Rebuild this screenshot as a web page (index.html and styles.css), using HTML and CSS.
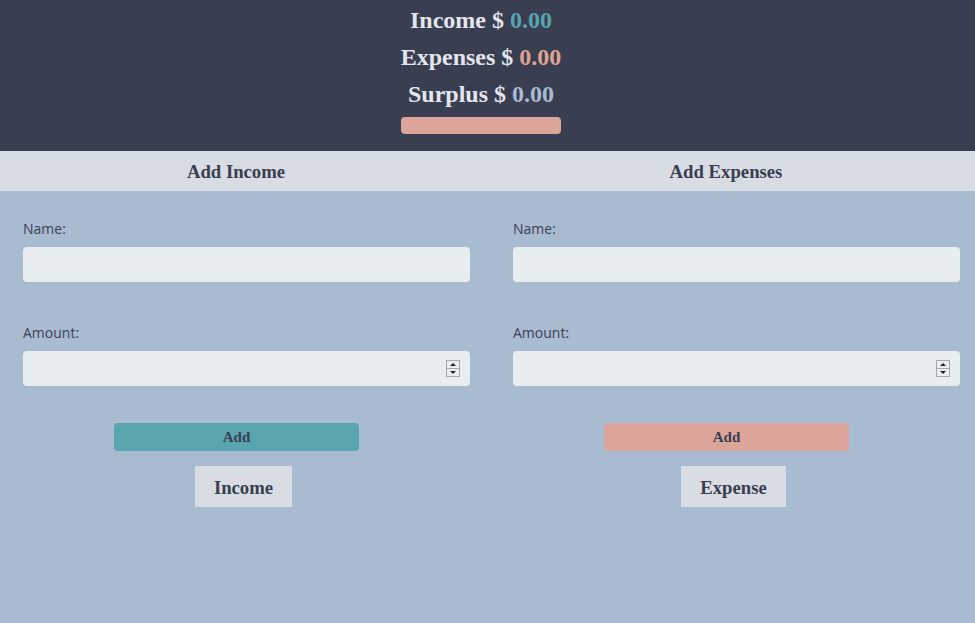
FILE: index.html
```html
<!DOCTYPE html>
<html>
<head>
<meta charset="utf-8">
<link rel="stylesheet" href="styles.css">
</head>
<body>
<header class="summary">
  <div class="total">Income $ <span class="val income">0.00</span></div>
  <div class="total">Expenses $ <span class="val expense">0.00</span></div>
  <div class="total">Surplus $ <span class="val surplus">0.00</span></div>
  <div class="bar"></div>
</header>
<main class="panels">
  <section class="panel">
    <h3 class="panel-title">Add Income</h3>
    <form class="form">
      <label class="label">Name:</label>
      <input class="field" type="text">
      <label class="label label-amount">Amount:</label>
      <div class="field-wrap">
        <input class="field" type="text">
        <svg class="spin" width="14" height="17" viewBox="0 0 14 17"><rect x="0.5" y="0.5" width="13" height="16" fill="#e8edf0" stroke="#a4a8ad"/><line x1="0.5" y1="8.5" x2="13.5" y2="8.5" stroke="#a4a8ad"/><path d="M4 6 L7 3 L10 6 Z" fill="#222"/><path d="M4 11 L7 14 L10 11 Z" fill="#222"/></svg>
      </div>
      <div class="add-row"><button type="button" class="add add-income">Add</button></div>
      <div class="type-row"><button type="button" class="type">Income</button></div>
    </form>
  </section>
  <section class="panel">
    <h3 class="panel-title">Add Expenses</h3>
    <form class="form">
      <label class="label">Name:</label>
      <input class="field" type="text">
      <label class="label label-amount">Amount:</label>
      <div class="field-wrap">
        <input class="field" type="text">
        <svg class="spin" width="14" height="17" viewBox="0 0 14 17"><rect x="0.5" y="0.5" width="13" height="16" fill="#e8edf0" stroke="#a4a8ad"/><line x1="0.5" y1="8.5" x2="13.5" y2="8.5" stroke="#a4a8ad"/><path d="M4 6 L7 3 L10 6 Z" fill="#222"/><path d="M4 11 L7 14 L10 11 Z" fill="#222"/></svg>
      </div>
      <div class="add-row"><button type="button" class="add add-expense">Add</button></div>
      <div class="type-row"><button type="button" class="type">Expense</button></div>
    </form>
  </section>
</main>
</body>
</html>
```
FILE: styles.css
```css
* { box-sizing: border-box; }
html, body { margin: 0; padding: 0; }
body {
  background: #a9bbd0;
  font-family: "Liberation Serif", "Times New Roman", serif;
  color: #393e50;
  width: 975px;
  height: 623px;
  overflow: hidden;
}
.summary {
  background: #393e50;
  height: 151px;
  padding-top: 2px;
  padding-right: 13px;
  display: flex;
  flex-direction: column;
  align-items: center;
}
.total {
  font-size: 24px;
  font-weight: bold;
  line-height: 37px;
  color: #e3e6ee;
}
.val.income { color: #58a5b0; }
.val.expense { color: #dfa393; }
.val.surplus { color: #a9bbd0; }
.bar {
  width: 160px;
  height: 17px;
  margin-top: 4px;
  background: #dca59b;
  border-radius: 4px;
}
.panels {
  display: grid;
  grid-template-columns: 490px 490px;
}
.panel-title {
  margin: 0;
  height: 40px;
  line-height: 40px;
  padding-top: 1px;
  background: #d8dce3;
  font-size: 18.72px;
  font-weight: bold;
  text-align: center;
  padding-right: 18px;
}
.form {
  display: flex;
  flex-direction: column;
  padding: 28px 20px 0 23px;
}
.label {
  font-family: "Open Sans", "Noto Sans", sans-serif;
  font-size: 14px;
  line-height: 20px;
  color: #3b4254;
  margin-bottom: 8px;
}
.label-amount { margin-top: 41px; }
.field {
  display: block;
  width: 100%;
  height: 35px;
  border: none;
  border-radius: 4px;
  background: #e8edf0;
  outline: none;
}
.field-wrap { position: relative; }
.spin {
  position: absolute;
  right: 10px;
  top: 9px;
}
.add-row {
  display: flex;
  justify-content: center;
  padding-right: 20px;
  margin-top: 37px;
}
.add {
  width: 245px;
  height: 28px;
  padding-top: 2px;
  border: none;
  border-radius: 4px;
  font-family: "Liberation Serif", "Times New Roman", serif;
  font-size: 15px;
  font-weight: bold;
  color: #393e50;
  cursor: pointer;
}
.add-income { background: #58a5b0; }
.add-expense { background: #dca59b; }
.type-row {
  display: flex;
  justify-content: center;
  padding-right: 6px;
  margin-top: 15px;
}
.type {
  height: 41px;
  padding: 2px 19px 0;
  border: none;
  border-radius: 0;
  background: #d8dce3;
  font-family: "Liberation Serif", "Times New Roman", serif;
  font-size: 18.72px;
  font-weight: bold;
  color: #393e50;
}
```
